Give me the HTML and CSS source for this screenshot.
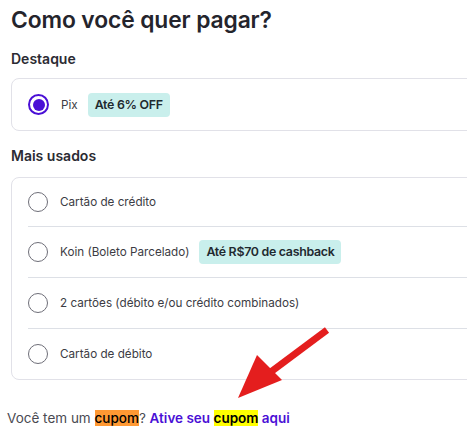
FILE: index.html
```html
<!DOCTYPE html>
<html lang="pt-BR">
<head>
<meta charset="utf-8">
<link rel="stylesheet" href="styles.css">
</head>
<body>
<div class="page">
  <h1 class="title">Como você quer pagar?</h1>
  <h2 class="section">Destaque</h2>
  <div class="card">
    <div class="row">
      <span class="radio checked"></span>
      <span class="label">Pix</span>
      <span class="badge">Até 6% OFF</span>
    </div>
  </div>
  <h2 class="section">Mais usados</h2>
  <div class="card card-list">
    <div class="row">
      <span class="radio"></span>
      <span class="label">Cartão de crédito</span>
    </div>
    <div class="row">
      <span class="radio"></span>
      <span class="label">Koin (Boleto Parcelado)</span>
      <span class="badge">Até R$70 de cashback</span>
    </div>
    <div class="row">
      <span class="radio"></span>
      <span class="label">2 cartões (débito e/ou crédito combinados)</span>
    </div>
    <div class="row">
      <span class="radio"></span>
      <span class="label">Cartão de débito</span>
    </div>
  </div>
  <p class="coupon">Você tem um <mark class="hl-orange">cupom</mark>? <a class="link">Ative seu <mark class="hl-yellow">cupom</mark> aqui</a></p>
</div>
<svg class="arrow" width="467" height="443" viewBox="0 0 467 443">
  <line x1="327" y1="330" x2="268" y2="374" stroke="#e41e1e" stroke-width="7"/>
  <polygon points="238,398 257,355 282,380" fill="#e41e1e"/>
</svg>
</body>
</html>
```
FILE: styles.css
```css
html, body {
  margin: 0;
  padding: 0;
  overflow: hidden;
  background: #fff;
}
body {
  font-family: "Inter", "Open Sans", sans-serif;
  color: #2b2b33;
}
.page {
  padding: 6px 0 0 11px;
  width: 500px;
}
.title {
  margin: 0;
  font-size: 22.8px;
  font-weight: 600;
  line-height: 28px;
  color: #24242c;
  letter-spacing: -0.1px;
}
.section {
  margin: 16px 0 0;
  font-size: 14px;
  font-weight: 600;
  line-height: 18px;
  color: #2b2b33;
}
.card {
  margin-top: 10px;
  border: 1px solid #e1e1e8;
  border-radius: 8px;
  padding: 0 0 0 16px;
}
.card-list {
  margin-top: 12px;
}
.row {
  display: flex;
  align-items: center;
  height: 50px;
  border-top: 1px solid #dde0e6;
}
.row:first-child {
  border-top: none;
  height: 51px;
}
.card-list .row:first-child {
  height: 48px;
}
.radio {
  width: 18px;
  height: 18px;
  border: 1.5px solid #6e6e78;
  border-radius: 50%;
  box-sizing: content-box;
  margin-right: 12px;
  flex: none;
}
.radio.checked {
  border: 2px solid #4a0fd6;
  width: 17px;
  height: 17px;
  position: relative;
}
.radio.checked::after {
  content: "";
  position: absolute;
  left: 2.5px;
  top: 2.5px;
  width: 12px;
  height: 12px;
  border-radius: 50%;
  background: #4a0fd6;
}
.label {
  font-size: 11.7px;
  color: #3c3c44;
}
.badge {
  margin-left: 10px;
  background: #c9efec;
  border-radius: 4px;
  padding: 5px 7px;
  font-size: 12.4px;
  line-height: 14px;
  letter-spacing: -0.3px;
  font-weight: 600;
  color: #1f2a30;
}
.coupon {
  margin: 30px 0 0 -4px;
  font-size: 13.5px;
  color: #4a4a52;
}
mark {
  color: #000;
  font-weight: 500;
}
.hl-orange {
  background: #ff9933;
}
.hl-yellow {
  background: #ffff00;
  font-weight: 600;
}
.link {
  color: #4a0fd6;
  font-weight: 600;
}
.arrow {
  position: absolute;
  left: 0;
  top: 0;
  pointer-events: none;
}
```
